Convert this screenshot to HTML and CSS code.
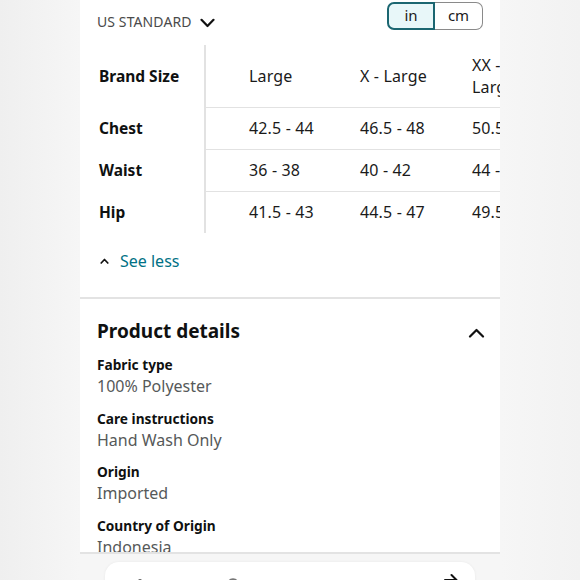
FILE: index.html
```html
<!DOCTYPE html>
<html>
<head>
<meta charset="utf-8">
<link rel="stylesheet" href="styles.css">
</head>
<body>
<div class="page">
  <div class="topbar">
    <div class="standard">US STANDARD
      <svg class="chev-down" width="15" height="10" viewBox="0 0 15 10"><path d="M1.5 1.8 L7.5 8 L13.5 1.8" fill="none" stroke="#111" stroke-width="2.2" stroke-linecap="round" stroke-linejoin="round"/></svg>
    </div>
    <div class="toggle">
      <div class="unit active">in</div>
      <div class="unit">cm</div>
    </div>
  </div>

  <table class="sizes">
    <colgroup><col class="c1"><col class="cd"><col class="cd"><col class="cd"></colgroup>
    <tr class="head">
      <th class="first">Brand Size</th>
      <td>Large</td>
      <td>X - Large</td>
      <td class="wrap">XX - Large</td>
    </tr>
    <tr>
      <th class="first">Chest</th>
      <td>42.5 - 44</td>
      <td>46.5 - 48</td>
      <td>50.5 - 52</td>
    </tr>
    <tr>
      <th class="first">Waist</th>
      <td>36 - 38</td>
      <td>40 - 42</td>
      <td>44 - 46</td>
    </tr>
    <tr class="last">
      <th class="first">Hip</th>
      <td>41.5 - 43</td>
      <td>44.5 - 47</td>
      <td>49.5 - 51</td>
    </tr>
  </table>

  <div class="seeless">
    <svg class="caret" width="9" height="6" viewBox="0 0 9 6"><path d="M1.2 5 L4.5 1.5 L7.8 5" fill="none" stroke="#111" stroke-width="1.7" stroke-linecap="round" stroke-linejoin="round"/></svg>
    <span>See less</span>
  </div>

  <div class="details">
    <div class="dhead">
      <h2>Product details</h2>
      <svg class="chev-up" width="17" height="10" viewBox="0 0 17 10"><path d="M2 8.5 L8.5 2 L15 8.5" fill="none" stroke="#111" stroke-width="2.2" stroke-linecap="round" stroke-linejoin="round"/></svg>
    </div>
    <div class="item"><div class="label">Fabric type</div><div class="value">100% Polyester</div></div>
    <div class="item"><div class="label">Care instructions</div><div class="value">Hand Wash Only</div></div>
    <div class="item"><div class="label">Origin</div><div class="value">Imported</div></div>
    <div class="item"><div class="label">Country of Origin</div><div class="value">Indonesia</div></div>
  </div>
</div>

<div class="bottomcard">
  <svg class="ic ic1" width="10" height="8" viewBox="0 0 10 8"><circle cx="4" cy="6" r="2" fill="#666"/></svg>
  <svg class="ic ic2" width="12" height="8" viewBox="0 0 12 8"><path d="M2 8 C2 3 10 3 10 8" fill="none" stroke="#777" stroke-width="2"/></svg>
  <svg class="ic ic3" width="14" height="10" viewBox="0 0 14 10"><path d="M1 7 L12 7 M7.5 2 L12.5 7" fill="none" stroke="#111" stroke-width="2" stroke-linecap="round"/></svg>
</div>
</body>
</html>
```

FILE: styles.css
```css
html, body {
  margin: 0;
  padding: 0;
}
body {
  width: 580px;
  height: 580px;
  overflow: hidden;
  background: linear-gradient(90deg, #efefef 0px, #f6f6f6 80px, #f6f6f6 500px, #f2f2f2 580px);
  font-family: "Noto Sans", "Open Sans", sans-serif;
  color: #0f1111;
}
.page {
  margin-left: 80px;
  width: 420px;
  height: 552px;
  background: #fff;
  overflow: hidden;
  border-bottom: 2px solid #e3e3e3;
  box-sizing: content-box;
}
.topbar {
  display: flex;
  justify-content: space-between;
  align-items: flex-start;
  padding: 2px 17px 0 17px;
  height: 43px;
}
.standard {
  margin-top: 10px;
  font-size: 14px;
  line-height: 20px;
  color: #4a4a4a;
  display: flex;
  align-items: center;
  letter-spacing: 0.1px;
}
.chev-down {
  margin-left: 8px;
  margin-top: 1px;
}
.toggle {
  display: flex;
  height: 28px;
}
.unit {
  width: 48px;
  height: 28px;
  box-sizing: border-box;
  display: flex;
  align-items: center;
  justify-content: center;
  font-size: 15px;
  color: #1a1a1a;
  border: 1.5px solid #8a8a8a;
  border-left: none;
  border-radius: 0 7px 7px 0;
  padding-bottom: 2px;
}
.unit.active {
  border: 2px solid #1b6671;
  border-radius: 7px 0 0 7px;
  background: #e8f7f9;
}
.sizes {
  margin-left: 17px;
  border-collapse: collapse;
  table-layout: fixed;
  width: 444px;
  font-size: 16px;
}
.c1 { width: 108px; }
.cd { width: 112px; }
.sizes th, .sizes td {
  padding: 10px 0 10px 0;
  line-height: 21px;
  text-align: left;
  vertical-align: middle;
  white-space: nowrap;
}
.sizes th.first {
  font-weight: 700;
  font-size: 15.5px;
  padding-left: 2px;
  border-right: 2px solid #e2e2e2;
}
.sizes td {
  padding-left: 43px;
  padding-right: 0;
  border-bottom: 1.5px solid #e2e2e2;
  color: #1a1a1a;
  letter-spacing: 0.15px;
}
.sizes td.wrap {
  white-space: normal;
}
.sizes tr.head td, .sizes tr.head th {
  padding-top: 9px;
  padding-bottom: 9px;
  line-height: 22px;
}
.sizes tr.last td {
  border-bottom: none;
}
.seeless {
  margin-top: 17px;
  padding-left: 20px;
  display: flex;
  align-items: center;
  height: 22px;
  font-size: 16px;
  color: #007185;
}
.caret {
  margin-right: 11px;
  margin-top: -1px;
}
.details {
  margin-top: 25px;
  border-top: 2px solid #e3e3e3;
  padding: 18px 15px 0 17px;
}
.dhead {
  display: flex;
  justify-content: space-between;
  align-items: center;
  height: 28px;
}
.dhead h2 {
  margin: 0;
  font-size: 19px;
  font-weight: 700;
  line-height: 28px;
  color: #0f1111;
}
.chev-up {
  margin-top: 4px;
}
.item {
  margin-top: 11.5px;
}
.dhead + .item {
  margin-top: 10px;
}
.label {
  font-size: 13.7px;
  font-weight: 700;
  line-height: 20px;
  color: #0f1111;
}
.value {
  font-size: 16px;
  line-height: 22px;
  color: #565959;
}
.bottomcard {
  position: relative;
  margin-top: 8px;
  margin-left: 105px;
  width: 370px;
  height: 40px;
  background: #fff;
  border-radius: 14px;
  box-shadow: 0 0 3px rgba(0,0,0,0.06);
}
.ic {
  position: absolute;
}
.ic1 { left: 31px; top: 13px; }
.ic2 { left: 122px; top: 13px; }
.ic3 { left: 339px; top: 11px; }
```
